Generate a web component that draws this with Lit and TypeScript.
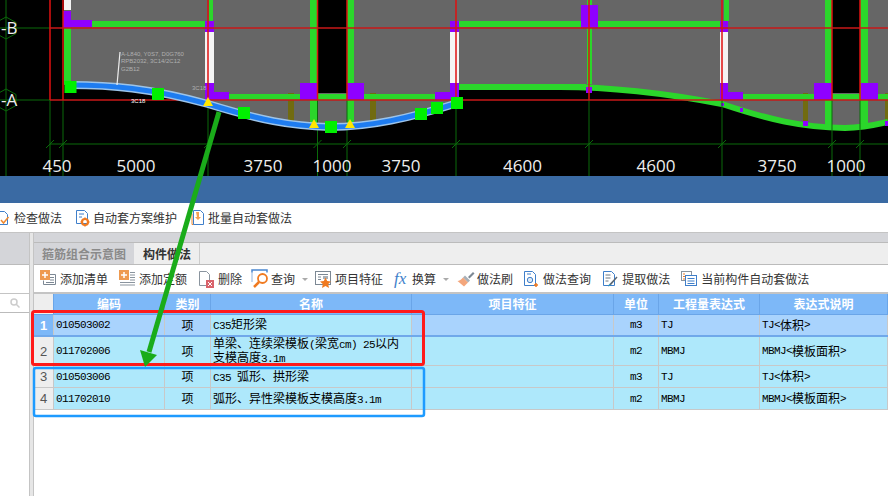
import { LitElement, html, svg, css } from 'lit';
import { customElement } from 'lit/decorators.js';

type Box = [number, number, number, number];

const GRID_X = [50, 63, 208, 317.5, 347, 456, 589, 722, 832, 860];

const PURPLE: Box[] = [
  [63, 11, 8, 17], [71, 20, 21, 7], [205, 21, 9, 11], [205, 83, 9, 17], [214, 92, 15, 8],
  [300, 83, 17, 17], [347, 83, 17, 17], [435, 92, 21, 8], [450, 21, 9, 11], [450, 83, 9, 17],
  [581, 5, 17, 23], [586, 87, 6, 6], [720, 21, 8, 11], [720, 83, 8, 17], [728, 92, 15, 8],
  [814, 83, 18, 17], [861, 83, 17, 17], [721, 103, 3, 3], [740, 108, 3, 4], [803, 121, 5, 5],
  [885, 121, 3, 5], [288, 122, 6, 4], [370, 122, 6, 4],
];

const WALLS: Box[] = [
  [64, 28, 7, 56], [92, 21, 113, 6], [209, 0, 4, 21], [229, 94, 71, 6], [310, 0, 7, 125],
  [317, 94, 30, 6], [347, 0, 7, 125], [364, 94, 71, 6], [459, 21, 122, 6], [459, 84, 127, 6],
  [587, 0, 5, 5], [587, 28, 5, 56], [598, 21, 122, 6], [724, 0, 5, 21], [743, 94, 71, 6],
  [825, 0, 7, 125], [832, 94, 29, 6], [860, 0, 8, 125], [878, 94, 10, 6],
];

const OPENINGS: Box[] = [[64, 0, 7, 10], [205, 32, 9, 51], [450, 32, 9, 51], [720, 32, 8, 51]];
const OLIVE: Box[] = [[288, 93, 6, 29], [370, 93, 6, 29], [803, 93, 5, 28], [885, 93, 3, 28]];
const NODES: [number, number][] = [[70.5, 87], [158, 94], [244, 113], [331, 127], [421, 114], [437, 108], [457, 103]];
const SUPPORTS: [number, number][] = [[208, 103], [314, 125], [350, 125]];

const SPANS: [string, number][] = [
  ['450', 57], ['5000', 136], ['3750', 263], ['1000', 332], ['3750', 401],
  ['4600', 522.5], ['4600', 656], ['3750', 777], ['1000', 846],
];

const BEAM = 'C110 85 150 88 208 104C260 120 290 126 330 127C370 127 410 118 458 103';
const CURVE = 'C620 87 680 96 722 104C770 120 800 127 845 128C860 128 875 125 888 122';

const rects = (list: Box[], cls: string) =>
  list.map(([x, y, w, h]) => svg`<rect class=${cls} x=${x} y=${y} width=${w} height=${h} />`);

const page = svg`<path d="M2.5 1.5h8l3 3v10h-11z" fill="#fff" stroke="#3f7fca" />`;

const ICONS: Record<string, unknown> = {
  check: html`<svg width="16" height="16" viewBox="0 0 16 16">${page}
    <path d="M7 10l2.500 3 5-6" fill="none" stroke="#f08a30" stroke-width="1.500" /></svg>`,
  gear: html`<svg width="16" height="18" viewBox="0 0 16 18">${page}
    <path d="M5 5h5M5 8h3" stroke="#3f7fca" />
    <circle cx="11" cy="13" r="3" fill="none" stroke="#f07a20" stroke-width="2.200" />
    <path d="M11 8.500v1.500M11 16v1.500M6.500 13H8M14 13h1.500" stroke="#f07a20" stroke-width="1.500" /></svg>`,
  batch: html`<svg width="16" height="18" viewBox="0 0 16 18">
    <path d="M1 4.500h2v11h9" fill="none" stroke="#f08a30" />
    <path d="M4.500 1.500h7l3 3v11h-10z" fill="#fff" stroke="#3f7fca" />
    <path d="M7 3h3v5h2l-3 3-3-3h2z" fill="#f6a050" /></svg>`,
  list: html`<svg width="16" height="18" viewBox="0 0 16 18">
    <path d="M6 4.500h9.500v10H3.500v-4" fill="#fff" stroke="#7c8894" />
    <path d="M10 7.500h4M10 10h4M6 12.500h8" stroke="#7c8894" />
    <rect x="0" y="0" width="10" height="10" fill="#ee9a50" />
    <path d="M5 2v6M2 5h6" stroke="#fff" stroke-width="1.500" /></svg>`,
  quota: html`<svg width="16" height="18" viewBox="0 0 16 18">
    <path d="M11 2.500h5M11 5h5M11 7.500h5M11 10h5M1 12.500h15M1 15h15" stroke="#8a949e" />
    <rect x="0" y="0" width="10" height="10" fill="#ee9a50" />
    <path d="M5 2v6M2 5h6" stroke="#fff" stroke-width="1.500" /></svg>`,
  remove: html`<svg width="16" height="18" viewBox="0 0 16 18">
    <path d="M1.500 1.500h7l3 3v11h-10z" fill="#fff" stroke="#8a949e" />
    <rect x="8" y="10" width="8" height="8" fill="#d9636b" />
    <path d="M10 12l4 4M14 12l-4 4" stroke="#fff" /></svg>`,
  query: html`<svg width="20" height="19" viewBox="0 0 20 19">
    <path d="M1 3.500V1h15v2.500" fill="none" stroke="#4a86d0" stroke-width="1.500" />
    <path d="M1 3v10" stroke="#8fb4e0" />
    <circle cx="11.500" cy="9.500" r="4.500" fill="#fff" stroke="#f07a20" stroke-width="1.800" />
    <path d="M8 13l-5 5" stroke="#f07a20" stroke-width="2.500" /></svg>`,
  feature: html`<svg width="16" height="18" viewBox="0 0 16 18">
    <rect x="0.500" y="1.500" width="15" height="13" fill="#fff" stroke="#7c8894" />
    <path d="M3 4.500h10M3 7h3M3 9.500h3" stroke="#7c8894" />
    <rect x="8" y="6" width="5" height="3" fill="#a8b0b8" />
    <path d="M10.500 7.500l1.700 3.600 3.800.4-2.800 2.600.8 3.900-3.500-2-3.500 2 .8-3.900-2.800-2.600 3.800-.4z" fill="#f07a20" /></svg>`,
  brush: html`<svg width="18" height="18" viewBox="0 0 18 18">
    <path d="M11 7l5-5 1.500 1.500-5 5z" fill="#7c8894" />
    <path d="M8 5.500l5 5-2 2-5-5z" fill="#a8b0b8" />
    <path d="M6 7.500l5 5-4 4-6.500-5.500c2 0 3.500-1.500 5.500-3.500z" fill="#f3a67c" /></svg>`,
  lookup: html`<svg width="14" height="18" viewBox="0 0 14 18">
    <path d="M.5 1.500h8l3 3v11H.5z" fill="#fff" stroke="#3f7fca" />
    <path d="M3 4h4" stroke="#3f7fca" />
    <circle cx="6" cy="10" r="2.700" fill="#dbe8f6" stroke="#3f7fca" />
    <path d="M12 13v4M10 15h4" stroke="#f07a20" stroke-width="1.500" /></svg>`,
  extract: html`<svg width="16" height="18" viewBox="0 0 16 18">
    <path d="M1.500 1.500h8l3 3v11h-11z" fill="#fff" stroke="#3f7fca" />
    <path d="M3.500 5h5M3.500 8h5M3.500 11h3" stroke="#6b7680" />
    <path d="M14.500 6.500l1 1L9 15l-2.500 1.500L7.500 14z" fill="#5a6672" />
    <path d="M7 14l2 1-2.500 1.500z" fill="#2ea3c9" /></svg>`,
  auto: html`<svg width="16" height="18" viewBox="0 0 16 18">
    <rect x="0.500" y="1.500" width="10" height="9" fill="#fff" stroke="#8a949e" />
    <path d="M2 4h2M2 6.500h2M2 9h2" stroke="#f07a20" />
    <rect x="4.500" y="5.500" width="11" height="10" fill="#fff" stroke="#3f7fca" />
    <path d="M6.500 8.500h7M6.500 11h7M6.500 13.500h7" stroke="#3f7fca" /></svg>`,
};

const TOP_TOOLS = [
  { icon: 'check', text: '检查做法', cls: 'clip' },
  { icon: 'gear', text: '自动套方案维护', cls: 'snug' },
  { icon: 'batch', text: '批量自动套做法', cls: 'snug' },
];

const TOOLS = [
  { icon: 'list', text: '添加清单', cls: '' },
  { icon: 'quota', text: '添加定额', cls: '' },
  { icon: 'remove', text: '删除', cls: '' },
  { icon: 'query', text: '查询', cls: 'pull menu' },
  { icon: 'feature', text: '项目特征', cls: '' },
  { icon: 'fx', text: '换算', cls: 'menu' },
  { icon: 'brush', text: '做法刷', cls: 'near' },
  { icon: 'lookup', text: '做法查询', cls: 'far' },
  { icon: 'extract', text: '提取做法', cls: '' },
  { icon: 'auto', text: '当前构件自动套做法', cls: '' },
];

const lat = (t: string) => html`<span class="lat">${t}</span>`;

const ROWS = [
  {
    id: '1', cls: 'current', code: '010503002', unit: 'm3', expr: 'TJ',
    name: html`${lat('C35')}矩形梁`,
    note: html`${lat('TJ<')}体积${lat('>')}`,
  },
  {
    id: '2', cls: 'tall', code: '011702006', unit: 'm2', expr: 'MBMJ',
    name: html`单梁、连续梁模板${lat('(')}梁宽${lat('cm) 25')}以内<br />支模高度${lat('3.1m')}`,
    note: html`${lat('MBMJ<')}模板面积${lat('>')}`,
  },
  {
    id: '3', cls: '', code: '010503006', unit: 'm3', expr: 'TJ',
    name: html`${lat('C35 ')}弧形、拱形梁`,
    note: html`${lat('TJ<')}体积${lat('>')}`,
  },
  {
    id: '4', cls: '', code: '011702010', unit: 'm2', expr: 'MBMJ',
    name: html`弧形、异性梁模板支模高度${lat('3.1m')}`,
    note: html`${lat('MBMJ<')}模板面积${lat('>')}`,
  },
];

@customElement('app-root')
export class AppRoot extends LitElement {
  static styles = css`
    :host {
      display: flex;
      flex-direction: column;
      position: relative;
      width: 888px;
      height: 496px;
      overflow: hidden;
      background: #fff;
      color: #333;
      font: 12px 'Noto Sans CJK SC', 'Liberation Sans', sans-serif;
    }

    .cad {
      display: block;
      flex: none;
      background: #000;
    }
    .floor { fill: #666; }
    .void { fill: #000; }
    .wall { fill: #2bd62b; }
    .pier { fill: #8f00ff; }
    .opening { fill: #f4f4f4; }
    .olive { fill: #716b10; }
    .node { fill: #00f000; }
    .support { fill: #ffe600; }
    .axis { stroke: #0a6a0a; fill: none; }
    .grid { stroke: #e01010; stroke-width: 1.500; }
    .grid-h { stroke: #c81818; stroke-width: 1.500; }
    .beam-edge { fill: none; stroke: #9cc4ea; stroke-width: 8; }
    .beam { fill: none; stroke: #1e7cf0; stroke-width: 5; }
    .curve { fill: none; stroke: #2bd62b; stroke-width: 6; }
    .span { fill: #eee; font: 17px 'Open Sans', sans-serif; text-anchor: middle; }
    .mark { fill: #eee; font: 17px 'Open Sans', sans-serif; }
    .tiny { fill: #b0b0b0; font: 6px 'Liberation Sans', sans-serif; }
    .tiny.lit { fill: #fff; }
    .leader { stroke: #eee; stroke-width: 1.200; }

    .band {
      flex: none;
      height: 27px;
      background: #3a6aa3;
    }

    .tools {
      flex: none;
      display: flex;
      align-items: center;
      gap: 11px;
      background: #fff;
      white-space: nowrap;
    }
    .tools.top {
      height: 29px;
      gap: 12px;
      border-bottom: 1px solid #c4c4c4;
    }
    .tools.sub {
      height: 27px;
      padding-left: 6px;
      border-bottom: 2px solid #c4c4c4;
    }
    .tool {
      display: flex;
      align-items: center;
      gap: 4px;
    }
    .tool.clip { margin-left: -6px; }
    .tool.snug { gap: 3px; }
    .tool.near { gap: 2px; }
    .tool.far { gap: 5px; }
    .tool.pull { gap: 0; margin-left: -2px; }
    .caret {
      width: 0;
      height: 0;
      margin: 1px -3px 0 3px;
      border: 3px solid transparent;
      border-top: 3px solid #aaa;
      border-bottom: 0;
    }
    .pull .caret { margin: 1px -4px 0 7px; }
    .fx {
      width: 13px;
      margin-right: 1px;
      color: #3f7fca;
      font: italic 17px 'Liberation Serif', serif;
      line-height: 18px;
    }

    .main {
      flex: 1;
      display: flex;
      min-height: 0;
    }
    .side {
      flex: none;
      display: flex;
      flex-direction: column;
      width: 29px;
    }
    .side-head {
      height: 31px;
      background: #d4d5d9;
      border-bottom: 1px solid #bbb;
    }
    .side-gap {
      height: 28px;
      border-bottom: 1px solid #c4c4c4;
    }
    .side-search {
      display: flex;
      align-items: center;
      justify-content: flex-end;
      height: 18px;
      padding-right: 9px;
      border-bottom: 1px solid #bbb;
    }
    .splitter {
      flex: none;
      width: 3px;
      background: #e6e6e6;
      border-left: 1px solid #c4c4c4;
    }

    .pane {
      flex: 1;
      min-width: 0;
      border-left: 1px solid #c4c4c4;
    }
    .tab-head {
      height: 9px;
      background: #d4d5d9;
      border-bottom: 1px solid #bbb;
    }
    .tabs {
      display: flex;
      height: 21px;
      background: #eee;
      border-bottom: 1px solid #bbb;
      font-weight: 700;
      line-height: 21px;
    }
    .tab {
      padding: 0 8px;
      color: #8a8a8a;
      background: #d4d5d9;
      border-right: 1px solid #eee;
    }
    .tab.on {
      color: #333;
      background: #eee;
      border-right: 1px solid #ccc;
    }

    .row {
      display: grid;
      grid-template-columns: 20px 111px 46px 201px 202px 45px 101px 128px;
      height: 21px;
      color: #000;
      background: #aee8fb;
      border-bottom: 1px solid #c8c8c8;
    }
    .row.head {
      height: 20px;
      color: #fff;
      font-weight: 700;
      background: #7db8f8;
      border-bottom: 1px solid #6aa5e8;
    }
    .row.tall { height: 28px; }
    .row.current {
      height: 20px;
      background: #a9d3fd;
      border-bottom: 2px solid #70a8ea;
    }
    .cell {
      display: flex;
      align-items: center;
      padding-left: 2px;
      line-height: 12.500px;
      white-space: nowrap;
      border-right: 1px solid #c8c8c8;
    }
    .head .cell {
      justify-content: center;
      padding: 0;
      border-right-color: #6aa5e8;
    }
    .cell.mid {
      justify-content: center;
      padding: 0;
    }
    .cell.name { background: #aee8fb; }
    .cell.id {
      justify-content: center;
      padding: 0;
      color: #555;
      background: #eee;
      font: 13px 'Liberation Sans', sans-serif;
    }
    .current .cell.id {
      color: #fff;
      font-weight: 700;
      background: #7db8f8;
    }
    .lat {
      font: 11px 'Liberation Mono', monospace;
      letter-spacing: -0.600px;
    }

    .over {
      position: absolute;
      top: 0;
      left: 0;
      pointer-events: none;
    }
  `;

  private renderCad() {
    return html`<svg class="cad" width="888" height="176" viewBox="0 0 888 176">
      <path class="floor" d="M64 0V85H70${BEAM}L459 87H560${CURVE}V0Z" />
      <rect class="void" x="317" y="0" width="30" height="93" />
      <rect class="void" x="832" y="0" width="28" height="93" />
      ${rects(OLIVE, 'olive')}
      ${rects(WALLS, 'wall')}
      <path class="curve" d="M560 87${CURVE}" />
      ${rects(OPENINGS, 'opening')}
      ${rects(PURPLE, 'pier')}

      <path class="axis" d="M6 0V176M0 28H50M0 100H50M50 144H888" />
      <path class="axis" d="M6 17l10 5.500v11L6 39-4 33.500v-11zM6 89l10 5.500v11L6 111-4 105.500v-11z" />
      ${GRID_X.map(
        (x) => svg`<path class="axis" d="M${x} 100V176M${x - 4} 148l8-8" />`,
      )}
      ${GRID_X.map((x) => svg`<path class="grid" d="M${x} 0V100" />`)}
      <path class="grid-h" d="M50 28H888M50 100H888" />
      <text class="mark" x="1" y="34">-B</text>
      <text class="mark" x="1" y="106">-A</text>

      <path class="beam-edge" d="M70 85${BEAM}" />
      <path class="beam" d="M70 85${BEAM}" />
      ${NODES.map(([x, y]) => svg`<rect class="node" x=${x - 6} y=${y - 6} width="12" height="12" />`)}
      ${SUPPORTS.map(([x, y]) => svg`<path class="support" d="M${x} ${y - 6}l5 9h-10z" />`)}

      <path class="leader" d="M120 52L117 85" />
      <text class="tiny" x="121" y="56">A-L840, Y0S7, D0G760</text>
      <text class="tiny" x="121" y="63">RPB2032, 3C14/2C12</text>
      <text class="tiny" x="121" y="71">G2B12</text>
      <text class="tiny" x="192" y="90">3C18</text>
      <text class="tiny lit" x="131" y="103">3C18</text>

      ${SPANS.map(([t, x]) => svg`<text class="span" x=${x} y="172">${t}</text>`)}
    </svg>`;
  }

  private renderTool(t: { icon: string; text: string; cls: string }) {
    return html`<div class="tool ${t.cls}">
      ${t.icon === 'fx' ? html`<span class="fx">fx</span>` : ICONS[t.icon]}
      <span>${t.text}</span>
      ${t.cls.includes('menu') ? html`<span class="caret"></span>` : ''}
    </div>`;
  }

  render() {
    return html`
      ${this.renderCad()}
      <div class="band"></div>
      <div class="tools top">${TOP_TOOLS.map((t) => this.renderTool(t))}</div>
      <div class="main">
        <div class="side">
          <div class="side-head"></div>
          <div class="side-gap"></div>
          <div class="side-search">
            <svg width="10" height="10" viewBox="0 0 10 10">
              <circle cx="4" cy="4" r="3" fill="none" stroke="#ccc" stroke-width="1.500" />
              <path d="M6 6l3.500 3.500" stroke="#ccc" stroke-width="1.500" />
            </svg>
          </div>
        </div>
        <div class="splitter"></div>
        <div class="pane">
          <div class="tab-head"></div>
          <div class="tabs">
            <div class="tab">箍筋组合示意图</div>
            <div class="tab on">构件做法</div>
          </div>
          <div class="tools sub">${TOOLS.map((t) => this.renderTool(t))}</div>
          <div class="row head">
            <div class="cell id"></div>
            <div class="cell">编码</div>
            <div class="cell">类别</div>
            <div class="cell">名称</div>
            <div class="cell">项目特征</div>
            <div class="cell">单位</div>
            <div class="cell">工程量表达式</div>
            <div class="cell">表达式说明</div>
          </div>
          ${ROWS.map(
            (r) => html`<div class="row ${r.cls}">
              <div class="cell id">${r.id}</div>
              <div class="cell">${lat(r.code)}</div>
              <div class="cell mid">项</div>
              <div class="cell name"><div>${r.name}</div></div>
              <div class="cell"></div>
              <div class="cell mid">${lat(r.unit)}</div>
              <div class="cell">${lat(r.expr)}</div>
              <div class="cell">${r.note}</div>
            </div>`,
          )}
        </div>
      </div>
      <svg class="over" width="888" height="496" viewBox="0 0 888 496">
        <rect x="32.500" y="311.500" width="391" height="53" rx="2" fill="none" stroke="#ff1a1a" stroke-width="3" />
        <rect x="34" y="368" width="390" height="48" rx="2" fill="none" stroke="#1e9bff" stroke-width="2.500" />
        <path d="M219 112L149 352" stroke="#1aac1a" stroke-width="5" />
        <path d="M140 350L157 355L145 367Z" fill="#1aac1a" />
      </svg>
    `;
  }
}
